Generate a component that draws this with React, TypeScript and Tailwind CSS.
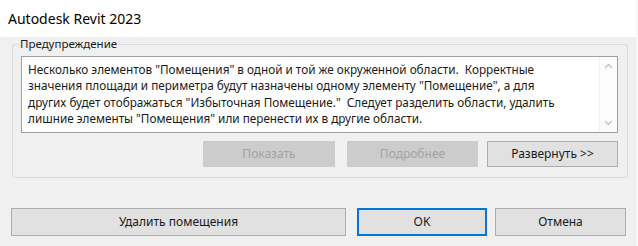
import React from 'react';

const lines = [
  'Несколько элементов "Помещения" в одной и той же окруженной области.  Корректные',
  'значения площади и периметра будут назначены одному элементу "Помещение", а для',
  'других будет отображаться "Избыточная Помещение."  Следует разделить области, удалить',
  'лишние элементы "Помещения" или перенести их в другие области.',
];

const Chevron = ({ up }: { up?: boolean }) => (
  <svg width="9" height="6" viewBox="0 0 9 6" className="block">
    <path
      d={up ? 'M1 5 L4.5 1.5 L8 5' : 'M1 1 L4.5 4.5 L8 1'}
      fill="none"
      stroke="#c2c2c2"
      strokeWidth="1.3"
    />
  </svg>
);

interface BtnProps {
  className?: string;
  disabled?: boolean;
  focused?: boolean;
  children: React.ReactNode;
}

const Btn: React.FC<BtnProps> = ({ className, disabled, focused, children }) => (
  <button
    className={[
      'flex items-center justify-center text-[12px]',
      disabled
        ? 'bg-[#cccccc] border border-[#cccccc] text-[#a2a2a2]'
        : focused
          ? 'bg-[#e1e1e1] border-2 border-[#0078d7] text-[#1a1a1a]'
          : 'bg-[#e1e1e1] border border-[#adadad] text-[#1a1a1a]',
      className ?? '',
    ].join(' ')}
  >
    {children}
  </button>
);

export default function App() {
  return (
    <div className="w-[638px] h-[246px] overflow-hidden bg-[#f0f0f0] font-['Noto_Sans',sans-serif] text-[#1a1a1a] border-r-2 border-[#f7f7f7]">
      <div className="h-[37px] bg-white pl-[8px] flex items-center text-[14px] text-black">
        Autodesk Revit 2023
      </div>

      <fieldset className="ml-[12px] w-[616px] mt-[-1px] border border-[#dcdcdc] rounded-[2px] pl-[8px] pr-[9px] pb-[10px]">
        <legend className="ml-[-2px] px-[1px] text-[11.5px] leading-[16px] text-[#1a1a1a]">
          Предупреждение
        </legend>
        <div className="mt-[4px] h-[77px] border border-[#a0a0a0] bg-white flex">
          <div className="flex-1 pl-[6px] pr-[2px] pt-[4px] text-[11.75px] leading-[16.4px] whitespace-pre">
            {lines.map((l) => (
              <div key={l}>{l}</div>
            ))}
          </div>
          <div className="w-[18px] flex flex-col items-center justify-between py-[6px] bg-[#fcfcfc] border-l border-[#f0f0f0]">
            <Chevron up />
            <Chevron />
          </div>
        </div>
        <div className="mt-[8px] flex justify-end">
          <Btn disabled className="w-[132px] h-[26px]">
            Показать
          </Btn>
          <Btn disabled className="w-[131px] h-[26px] ml-[12px]">
            Подробнее
          </Btn>
          <Btn className="w-[131px] h-[26px] ml-[9px]">Развернуть &gt;&gt;</Btn>
        </div>
      </fieldset>

      <div className="mt-[30px] pl-[11px] flex">
        <Btn className="w-[335px] h-[28px]">Удалить помещения</Btn>
        <Btn focused className="w-[130px] h-[28px] ml-[11px]">
          OK
        </Btn>
        <Btn className="w-[131px] h-[28px] ml-[8px]">Отмена</Btn>
      </div>
    </div>
  );
}
